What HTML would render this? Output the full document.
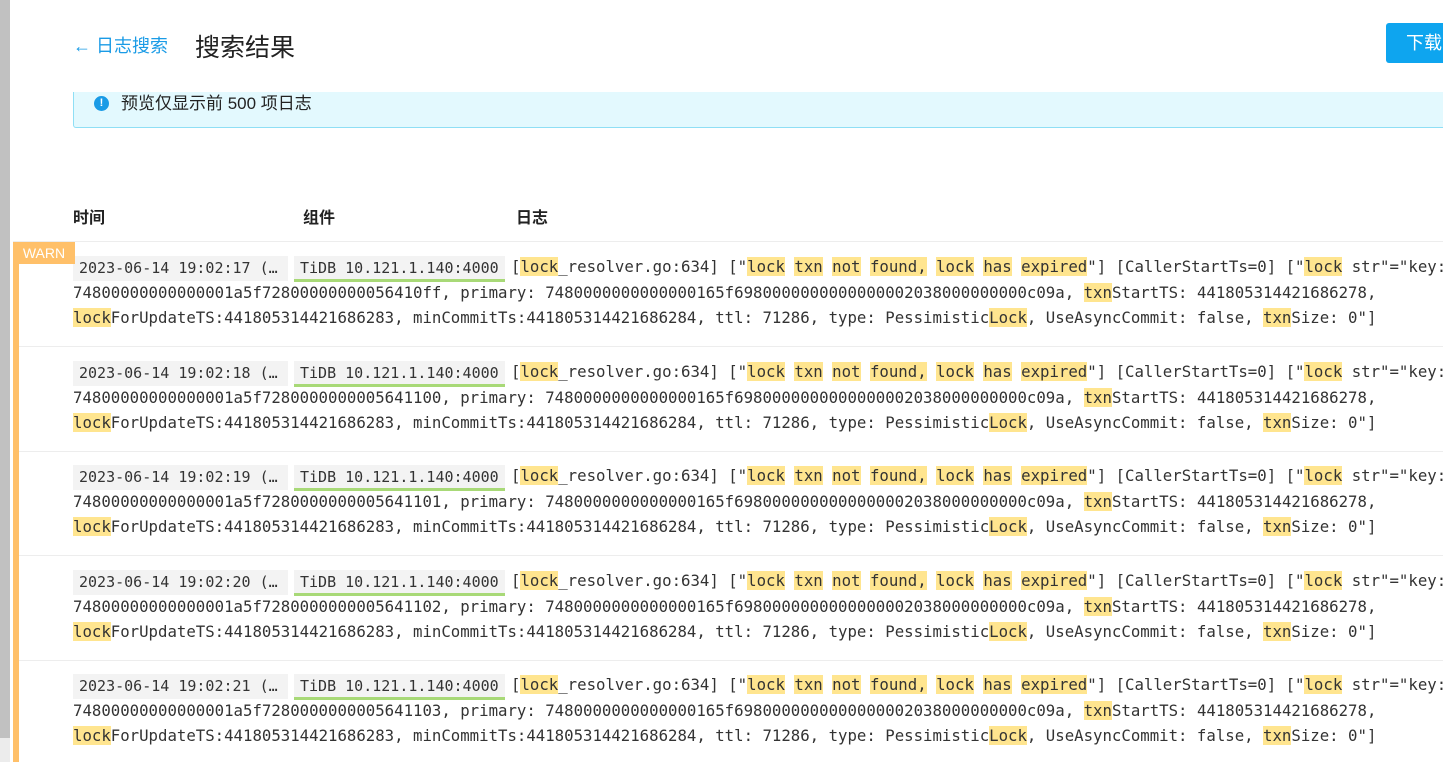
<!DOCTYPE html>
<html><head><meta charset="utf-8"><style>
*{margin:0;padding:0;box-sizing:border-box}
body{width:1443px;height:762px;overflow:hidden;background:#fff;position:relative;font-family:"Liberation Sans","Noto Sans CJK SC",sans-serif;color:#222}
.strip{position:absolute;left:0;top:0;width:10px;height:738px;background:#c1c1c1}
.strip2{position:absolute;left:0;top:738px;width:10px;height:24px;background:#ececec}
.back{position:absolute;left:73px;top:32px;font-size:18px;color:#1a9be6}
.title{position:absolute;left:195px;top:28px;font-size:25px;color:#222}
.btn{position:absolute;left:1386px;top:23px;width:80px;height:40px;background:#0ea5ef;border-radius:3px;color:#fff;font-size:18px;line-height:40px;padding-left:20px}
.alert{position:absolute;left:73px;top:92px;width:1400px;height:36px;background:#e3f9fe;border:1px solid #8fdff5;border-top:none;border-radius:0 0 3px 3px}
.alert .ic{position:absolute;left:20px;top:4px;width:15px;height:15px;border-radius:50%;background:#1a9be6;color:#fff;font-size:11px;line-height:15px;text-align:center;font-weight:bold}
.alert .t{position:absolute;left:47px;top:1px;font-size:17px;line-height:22px}
.th{position:absolute;top:204px;font-size:16px;font-weight:bold}
.hline{position:absolute;left:13px;width:1430px;height:1px;background:#ededed}
.bar{position:absolute;left:13px;top:242px;width:6px;height:520px;background:#ffc069}
.warn{position:absolute;left:13px;top:242px;width:62px;height:22px;background:#ffc069;color:#fff;font-size:14px;line-height:22px;text-align:center}
.row{position:absolute;left:0;width:1443px;height:104px}
.ln{position:absolute;left:73px;white-space:pre;font-family:"DejaVu Sans Mono","Liberation Mono",monospace;font-size:15.7px;color:#333;line-height:22px}
.date{position:absolute;left:73px;top:14px;width:215px;height:25px;background:#f3f3f3;font-family:"DejaVu Sans Mono",monospace;font-size:15px;line-height:25px;padding-left:6px;color:#333;white-space:pre;overflow:hidden}
.comp{position:absolute;left:294px;top:14px;width:211px;height:26px;background:#f3f3f3;border-bottom:3px solid #a8d977;font-family:"DejaVu Sans Mono",monospace;font-size:15px;line-height:24px;padding-left:6px;color:#333;white-space:pre;overflow:hidden}
.h{background:#ffe58f}
</style></head><body>
<div class="strip"></div><div class="strip2"></div>
<div class="back">← 日志搜索</div>
<div class="title">搜索结果</div>
<div class="btn">下载</div>
<div class="alert"><div class="ic">!</div><div class="t">预览仅显示前 500 项日志</div></div>
<div class="th" style="left:73px">时间</div>
<div class="th" style="left:303px">组件</div>
<div class="th" style="left:516px">日志</div>
<div class="hline" style="top:241px"></div>
<div class="hline" style="top:346px"></div>
<div class="hline" style="top:451px"></div>
<div class="hline" style="top:555px"></div>
<div class="hline" style="top:660px"></div>

<div class="row" style="top:242px">
<div class="date">2023-06-14 19:02:17 (…</div><div class="comp">TiDB 10.121.1.140:4000</div>
<div class="ln" style="left:511px;top:14px">[<span class="h">lock</span>_resolver.go:634] ["<span class="h">lock</span> <span class="h">txn</span> <span class="h">not</span> <span class="h">found,</span> <span class="h">lock</span> <span class="h">has</span> <span class="h">expired</span>"] [CallerStartTs=0] ["<span class="h">lock</span> str"="key: 7480000</div>
<div class="ln" style="top:40px">74800000000000001a5f72800000000056410ff, primary: 7480000000000000165f6980000000000000002038000000000c09a, <span class="h">txn</span>StartTS: 441805314421686278,</div>
<div class="ln" style="top:65px"><span class="h">lock</span>ForUpdateTS:441805314421686283, minCommitTs:441805314421686284, ttl: 71286, type: Pessimistic<span class="h">Lock</span>, UseAsyncCommit: false, <span class="h">txn</span>Size: 0"]</div>
</div>
<div class="row" style="top:347px">
<div class="date">2023-06-14 19:02:18 (…</div><div class="comp">TiDB 10.121.1.140:4000</div>
<div class="ln" style="left:511px;top:14px">[<span class="h">lock</span>_resolver.go:634] ["<span class="h">lock</span> <span class="h">txn</span> <span class="h">not</span> <span class="h">found,</span> <span class="h">lock</span> <span class="h">has</span> <span class="h">expired</span>"] [CallerStartTs=0] ["<span class="h">lock</span> str"="key: 7480000</div>
<div class="ln" style="top:40px">74800000000000001a5f7280000000005641100, primary: 7480000000000000165f6980000000000000002038000000000c09a, <span class="h">txn</span>StartTS: 441805314421686278,</div>
<div class="ln" style="top:65px"><span class="h">lock</span>ForUpdateTS:441805314421686283, minCommitTs:441805314421686284, ttl: 71286, type: Pessimistic<span class="h">Lock</span>, UseAsyncCommit: false, <span class="h">txn</span>Size: 0"]</div>
</div>
<div class="row" style="top:451px">
<div class="date">2023-06-14 19:02:19 (…</div><div class="comp">TiDB 10.121.1.140:4000</div>
<div class="ln" style="left:511px;top:14px">[<span class="h">lock</span>_resolver.go:634] ["<span class="h">lock</span> <span class="h">txn</span> <span class="h">not</span> <span class="h">found,</span> <span class="h">lock</span> <span class="h">has</span> <span class="h">expired</span>"] [CallerStartTs=0] ["<span class="h">lock</span> str"="key: 7480000</div>
<div class="ln" style="top:40px">74800000000000001a5f7280000000005641101, primary: 7480000000000000165f6980000000000000002038000000000c09a, <span class="h">txn</span>StartTS: 441805314421686278,</div>
<div class="ln" style="top:65px"><span class="h">lock</span>ForUpdateTS:441805314421686283, minCommitTs:441805314421686284, ttl: 71286, type: Pessimistic<span class="h">Lock</span>, UseAsyncCommit: false, <span class="h">txn</span>Size: 0"]</div>
</div>
<div class="row" style="top:556px">
<div class="date">2023-06-14 19:02:20 (…</div><div class="comp">TiDB 10.121.1.140:4000</div>
<div class="ln" style="left:511px;top:14px">[<span class="h">lock</span>_resolver.go:634] ["<span class="h">lock</span> <span class="h">txn</span> <span class="h">not</span> <span class="h">found,</span> <span class="h">lock</span> <span class="h">has</span> <span class="h">expired</span>"] [CallerStartTs=0] ["<span class="h">lock</span> str"="key: 7480000</div>
<div class="ln" style="top:40px">74800000000000001a5f7280000000005641102, primary: 7480000000000000165f6980000000000000002038000000000c09a, <span class="h">txn</span>StartTS: 441805314421686278,</div>
<div class="ln" style="top:65px"><span class="h">lock</span>ForUpdateTS:441805314421686283, minCommitTs:441805314421686284, ttl: 71286, type: Pessimistic<span class="h">Lock</span>, UseAsyncCommit: false, <span class="h">txn</span>Size: 0"]</div>
</div>
<div class="row" style="top:660px">
<div class="date">2023-06-14 19:02:21 (…</div><div class="comp">TiDB 10.121.1.140:4000</div>
<div class="ln" style="left:511px;top:14px">[<span class="h">lock</span>_resolver.go:634] ["<span class="h">lock</span> <span class="h">txn</span> <span class="h">not</span> <span class="h">found,</span> <span class="h">lock</span> <span class="h">has</span> <span class="h">expired</span>"] [CallerStartTs=0] ["<span class="h">lock</span> str"="key: 7480000</div>
<div class="ln" style="top:40px">74800000000000001a5f7280000000005641103, primary: 7480000000000000165f6980000000000000002038000000000c09a, <span class="h">txn</span>StartTS: 441805314421686278,</div>
<div class="ln" style="top:65px"><span class="h">lock</span>ForUpdateTS:441805314421686283, minCommitTs:441805314421686284, ttl: 71286, type: Pessimistic<span class="h">Lock</span>, UseAsyncCommit: false, <span class="h">txn</span>Size: 0"]</div>
</div>
<div class="bar"></div>
<div class="warn">WARN</div>
</body></html>
